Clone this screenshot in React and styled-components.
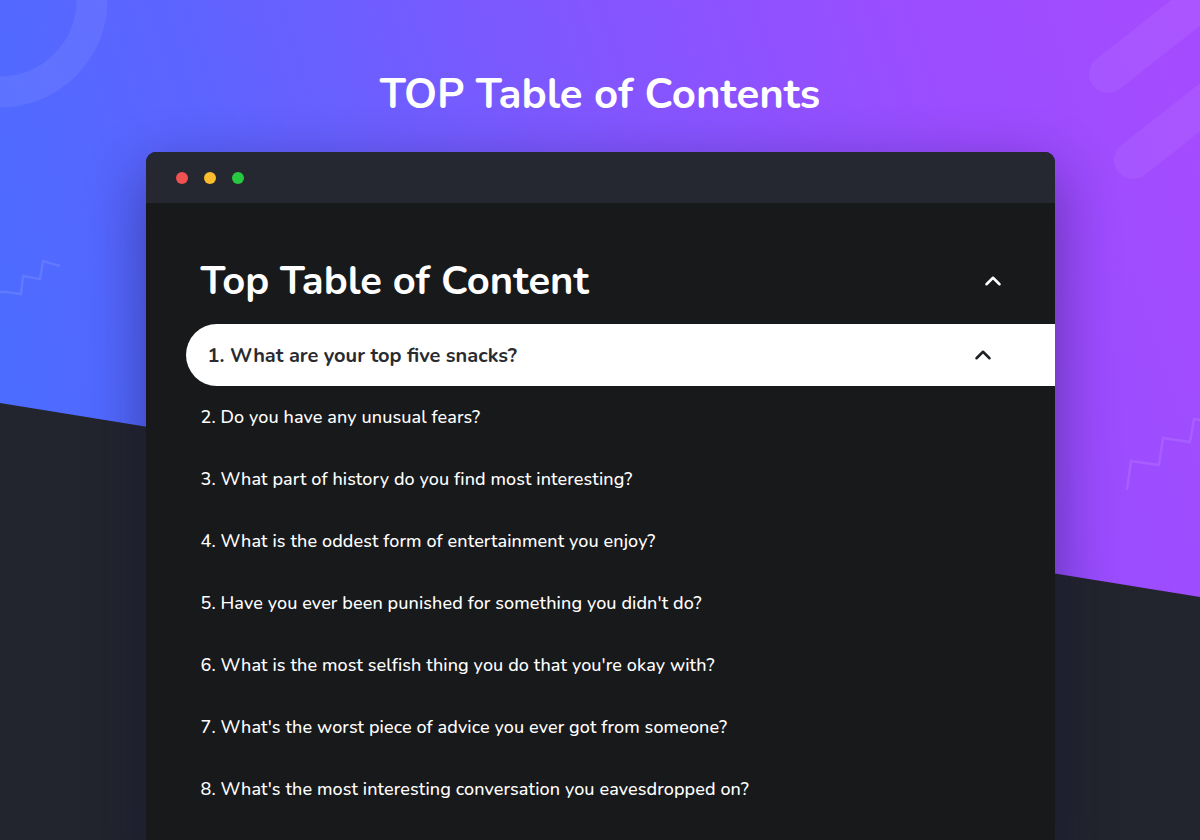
import styled, { createGlobalStyle } from "styled-components";
import { ChevronUp } from "lucide-react";

const questions = [
  "What are your top five snacks?",
  "Do you have any unusual fears?",
  "What part of history do you find most interesting?",
  "What is the oddest form of entertainment you enjoy?",
  "Have you ever been punished for something you didn't do?",
  "What is the most selfish thing you do that you're okay with?",
  "What's the worst piece of advice you ever got from someone?",
  "What's the most interesting conversation you eavesdropped on?",
];

export default function App() {
  return (
    <Page>
      <GlobalStyle />
      <Decor width="1200" height="840" viewBox="0 0 1200 840">
        <polygon points="0,403 1200,597 1200,840 0,840" fill="#22252d" />
        <circle cx="0" cy="0" r="92" fill="none" stroke="rgba(255,255,255,0.07)" strokeWidth="31" />
        <g stroke="rgba(255,255,255,0.06)" strokeWidth="38" strokeLinecap="round">
          <line x1="1108" y1="74" x2="1230" y2="-22" />
          <line x1="1133" y1="160" x2="1240" y2="76" />
        </g>
        <g fill="none" stroke="rgba(255,255,255,0.1)" strokeWidth="2.5">
          <polyline points="0,292 3,292 6,292 21,294 23,276 40,279 43,261 60,266" />
          <polyline points="1127,490 1131,461 1159,465 1163,438 1190,442 1194,419 1205,421" />
        </g>
      </Decor>
      <Content>
        <Heading>TOP Table of Contents</Heading>
        <Window>
          <TitleBar>
            <Dot color="#f05252" />
            <Dot color="#fbbd2e" />
            <Dot color="#28c840" />
          </TitleBar>
          <Body>
            <Header>
              <Title>Top Table of Content</Title>
              <ChevronUp size={26} strokeWidth={2.3} color="#ffffff" />
            </Header>
            <List>
              {questions.map((q, i) => (
                <Item key={i} active={i === 0}>
                  <span>
                    {i + 1}. {q}
                  </span>
                  {i === 0 && <ChevronUp size={26} strokeWidth={2.3} color="#1f2024" />}
                </Item>
              ))}
            </List>
          </Body>
        </Window>
      </Content>
    </Page>
  );
}

const GlobalStyle = createGlobalStyle`
  body {
    margin: 0;
    font-family: "Nunito", "Lato", "Noto Sans", sans-serif;
  }
`;

const Page = styled.div`
  position: relative;
  width: 1200px;
  height: 840px;
  overflow: hidden;
  background: linear-gradient(72deg, #4270ff 0%, #5d64ff 30%, #8356ff 58%, #9a4dff 80%, #a64bff 100%);
`;

const Decor = styled.svg`
  position: absolute;
  top: 0;
  left: 0;
`;

const Content = styled.div`
  position: relative;
  display: flex;
  flex-direction: column;
  align-items: center;
  padding-top: 70px;
`;

const Heading = styled.h1`
  margin: 0;
  font-size: 42px;
  line-height: 50px;
  font-weight: 700;
  color: #ffffff;
`;

const Window = styled.div`
  width: 909px;
  margin-top: 32px;
  border-radius: 10px 10px 0 0;
  overflow: hidden;
  background: #18191b;
  box-shadow: 0 20px 60px rgba(20, 10, 60, 0.45);
`;

const TitleBar = styled.div`
  height: 51px;
  display: flex;
  align-items: center;
  gap: 16px;
  padding-left: 30px;
  background: #252830;
`;

const Dot = styled.span`
  width: 12px;
  height: 12px;
  border-radius: 50%;
  background: ${(p) => p.color};
`;

const Body = styled.div`
  padding: 50px 0 40px 40px;
`;

const Header = styled.div`
  display: flex;
  align-items: center;
  justify-content: space-between;
  padding: 0 49px 0 15px;
  height: 56px;
  margin-bottom: 15px;
`;

const Title = styled.h2`
  margin: 0;
  font-size: 40px;
  line-height: 56px;
  font-weight: 700;
  color: #ffffff;
`;

const List = styled.div`
  display: flex;
  flex-direction: column;
`;

const Item = styled.div`
  height: 62px;
  display: flex;
  align-items: center;
  justify-content: space-between;
  padding: ${(p) => (p.active ? "0 59px 0 22px" : "0 59px 0 15px")};
  border-radius: 31px 0 0 31px;
  background: ${(p) => (p.active ? "#ffffff" : "transparent")};
  color: ${(p) => (p.active ? "#2a2b30" : "#ffffff")};
  font-size: ${(p) => (p.active ? "20px" : "18px")};
  font-weight: ${(p) => (p.active ? 700 : 500)};
  letter-spacing: ${(p) => (p.active ? "0" : "0.1px")};
`;
